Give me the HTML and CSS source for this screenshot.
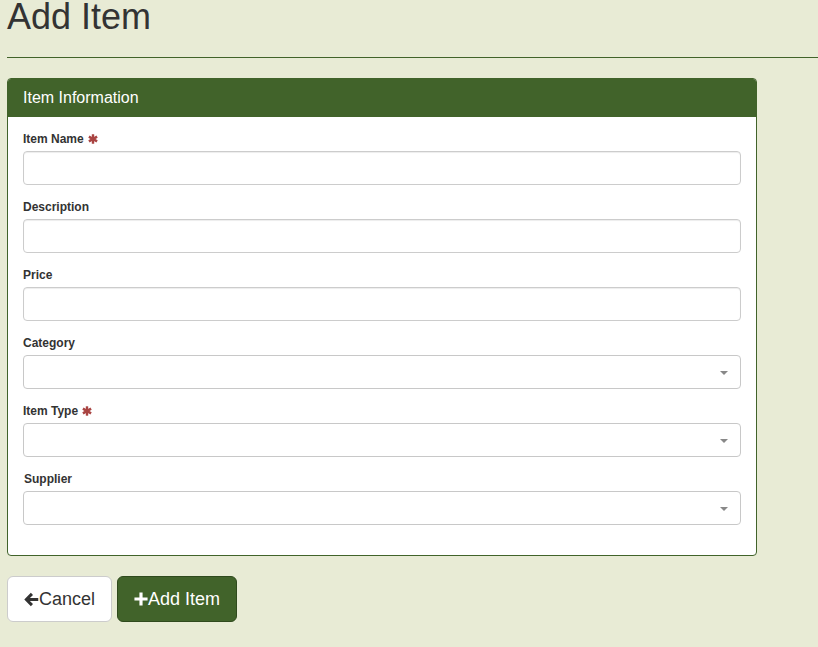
FILE: index.html
```html
<!DOCTYPE html>
<html>
<head>
<meta charset="utf-8">
<title>Add Item</title>
<link rel="stylesheet" href="styles.css">
</head>
<body>
<div class="page">
  <h1 class="title">Add Item</h1>
  <hr class="rule">
  <form class="form">
    <div class="panel">
      <div class="panel-heading">Item Information</div>
      <div class="panel-body">
        <div class="group">
          <label class="label">Item Name <svg class="req" viewBox="0 0 10 10" width="10" height="10"><g stroke="#a94442" stroke-width="2.4" stroke-linecap="butt"><line x1="5" y1="0.3" x2="5" y2="9.7"/><line x1="0.9" y1="2.65" x2="9.1" y2="7.35"/><line x1="0.9" y1="7.35" x2="9.1" y2="2.65"/></g></svg></label>
          <div class="control"></div>
        </div>
        <div class="group">
          <label class="label">Description</label>
          <div class="control"></div>
        </div>
        <div class="group">
          <label class="label">Price</label>
          <div class="control"></div>
        </div>
        <div class="group">
          <label class="label">Category</label>
          <div class="control select"><span class="caret"></span></div>
        </div>
        <div class="group">
          <label class="label">Item Type <svg class="req" viewBox="0 0 10 10" width="10" height="10"><g stroke="#a94442" stroke-width="2.4" stroke-linecap="butt"><line x1="5" y1="0.3" x2="5" y2="9.7"/><line x1="0.9" y1="2.65" x2="9.1" y2="7.35"/><line x1="0.9" y1="7.35" x2="9.1" y2="2.65"/></g></svg></label>
          <div class="control select"><span class="caret"></span></div>
        </div>
        <div class="group last">
          <label class="label label-indent">Supplier</label>
          <div class="control select"><span class="caret"></span></div>
        </div>
      </div>
    </div>
    <div class="actions">
      <a class="btn btn-default"><svg class="icon" viewBox="0 0 16 16" width="15" height="15"><path d="M7.3 0.8 L9.6 3.1 L6.3 6.5 L15.2 6.5 L15.2 9.5 L6.3 9.5 L9.6 12.9 L7.3 15.2 L0.3 8 Z" fill="#333"/></svg>Cancel</a>
      <a class="btn btn-primary"><svg class="icon" viewBox="0 0 16 16" width="14" height="14"><path d="M6.2 0.5 H9.8 V6.2 H15.5 V9.8 H9.8 V15.5 H6.2 V9.8 H0.5 V6.2 H6.2 Z" fill="#fff"/></svg>Add Item</a>
    </div>
  </form>
</div>
</body>
</html>
```

FILE: styles.css
```css
html, body {
  margin: 0;
  padding: 0;
  background: #e8ebd5;
  font-family: "Liberation Sans", Arial, sans-serif;
  color: #333;
  font-size: 14px;
}

.page {
  padding-left: 7px;
  overflow: hidden;
}

.title {
  margin: 0;
  font-size: 36px;
  font-weight: 500;
  line-height: 33px;
  color: #333;
}

.rule {
  margin: 24px 0 20px 0;
  border: 0;
  border-top: 1px solid #41632a;
  height: 0;
}

.form {
  margin: 0;
}

.panel {
  width: 750px;
  box-sizing: border-box;
  border: 1px solid #41632a;
  border-radius: 4px;
  background: #fff;
  overflow: hidden;
}

.panel-heading {
  background: #41632a;
  color: #fff;
  font-size: 16px;
  line-height: 18px;
  padding: 10px 15px 10px 15px;
}

.panel-body {
  padding: 14px 15px 16px 15px;
}

.group {
  margin-bottom: 14px;
}

.label {
  display: flex;
  align-items: center;
  gap: 4px;
  font-size: 12px;
  font-weight: bold;
  line-height: 17px;
  height: 17px;
  margin-bottom: 3px;
  color: #333;
}

.label-indent {
  padding-left: 1px;
}

.req {
  width: 10px;
  height: 10px;
  margin-top: -1px;
}

.control {
  height: 34px;
  box-sizing: border-box;
  border: 1px solid #ccc;
  border-radius: 4px;
  background: #fff;
  box-shadow: inset 0 1px 1px rgba(0, 0, 0, 0.075);
}

.select {
  display: flex;
  align-items: center;
  justify-content: flex-end;
  padding-right: 12px;
  box-shadow: none;
  border-color: #c8c8c8;
}

.caret {
  width: 0;
  height: 0;
  border-left: 4px solid transparent;
  border-right: 4px solid transparent;
  border-top: 4px solid #888;
  margin-top: 1px;
}

.actions {
  display: flex;
  gap: 5px;
  margin-top: 20px;
}

.btn {
  display: inline-flex;
  align-items: center;
  box-sizing: border-box;
  height: 46px;
  padding: 0 16px;
  font-size: 18px;
  line-height: 24px;
  border-radius: 6px;
  border: 1px solid transparent;
  text-decoration: none;
  cursor: pointer;
}

.btn-default {
  background: #fff;
  border-color: #ccc;
  color: #333;
}

.btn-primary {
  background: #41632a;
  border-color: #2f4a1d;
  color: #fff;
}

.icon {
  flex: none;
  margin-top: 0;
}
```
